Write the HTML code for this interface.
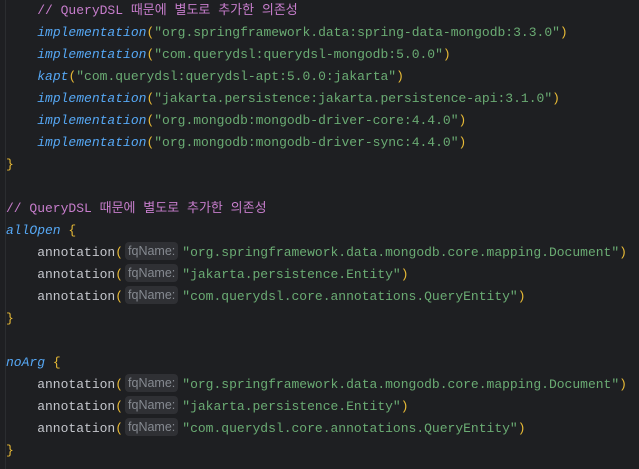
<!DOCTYPE html>
<html><head><meta charset="utf-8"><style>
body{margin:0;background:#1e1f22;width:639px;height:469px;overflow:hidden;position:relative}
.gut{position:absolute;left:5px;top:0;width:1px;height:469px;background:#2b2d30}
pre{margin:0;position:absolute;left:6px;top:0px;font-family:"Liberation Mono","Noto Sans CJK KR",monospace;font-size:13px;line-height:22px;color:#c4c6cc}
.c{color:#c77dcc}.f{color:#56a8f5;font-style:italic}.s{color:#6aab73}.p{color:#e8ba36}
.h{display:inline-block;background:#2f3034;color:#868a91;font-family:"Liberation Sans",sans-serif;font-size:12.5px;line-height:18px;padding:0 3px;border-radius:4px;margin:0 4px 0 2px;vertical-align:1px}
</style></head><body><div class="gut"></div><pre>    <span class="c">// QueryDSL 때문에 별도로 추가한 의존성</span>
    <span class="f">implementation</span><span class="p">(</span><span class="s">"org.springframework.data:spring-data-mongodb:3.3.0"</span><span class="p">)</span>
    <span class="f">implementation</span><span class="p">(</span><span class="s">"com.querydsl:querydsl-mongodb:5.0.0"</span><span class="p">)</span>
    <span class="f">kapt</span><span class="p">(</span><span class="s">"com.querydsl:querydsl-apt:5.0.0:jakarta"</span><span class="p">)</span>
    <span class="f">implementation</span><span class="p">(</span><span class="s">"jakarta.persistence:jakarta.persistence-api:3.1.0"</span><span class="p">)</span>
    <span class="f">implementation</span><span class="p">(</span><span class="s">"org.mongodb:mongodb-driver-core:4.4.0"</span><span class="p">)</span>
    <span class="f">implementation</span><span class="p">(</span><span class="s">"org.mongodb:mongodb-driver-sync:4.4.0"</span><span class="p">)</span>
<span class="p">}</span>

<span class="c">// QueryDSL 때문에 별도로 추가한 의존성</span>
<span class="f">allOpen</span> <span class="p">{</span>
    annotation<span class="p">(</span><span class="h">fqName:</span><span class="s">"org.springframework.data.mongodb.core.mapping.Document"</span><span class="p">)</span>
    annotation<span class="p">(</span><span class="h">fqName:</span><span class="s">"jakarta.persistence.Entity"</span><span class="p">)</span>
    annotation<span class="p">(</span><span class="h">fqName:</span><span class="s">"com.querydsl.core.annotations.QueryEntity"</span><span class="p">)</span>
<span class="p">}</span>

<span class="f">noArg</span> <span class="p">{</span>
    annotation<span class="p">(</span><span class="h">fqName:</span><span class="s">"org.springframework.data.mongodb.core.mapping.Document"</span><span class="p">)</span>
    annotation<span class="p">(</span><span class="h">fqName:</span><span class="s">"jakarta.persistence.Entity"</span><span class="p">)</span>
    annotation<span class="p">(</span><span class="h">fqName:</span><span class="s">"com.querydsl.core.annotations.QueryEntity"</span><span class="p">)</span>
<span class="p">}</span></pre></body></html>
